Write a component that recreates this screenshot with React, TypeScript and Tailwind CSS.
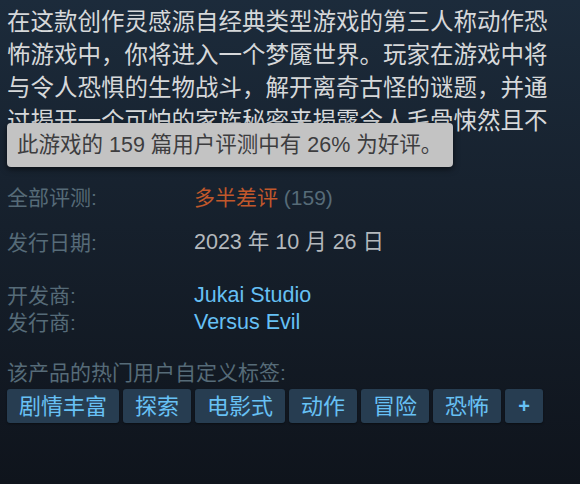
const tags = ["剧情丰富", "探索", "电影式", "动作", "冒险", "恐怖"];

const font = { fontFamily: '"Liberation Sans", "Noto Sans CJK SC", sans-serif' };

const App = () => {
  return (
    <div
      className="w-[580px] min-h-[484px] bg-gradient-to-b from-[#1c2b3b] to-[#0f141c] px-[7px]"
      style={font}
    >
      {/* description, cut off under the review tooltip */}
      <div className="relative pt-[6px]">
        <p className="w-[545px] h-[132px] overflow-hidden text-[23.5px] leading-[33px] text-[#d6d8da]">
          在这款创作灵感源自经典类型游戏的第三人称动作恐怖游戏中，你将进入一个梦魇世界。玩家在游戏中将与令人恐惧的生物战斗，解开离奇古怪的谜题，并通过揭开一个可怕的家族秘密来揭露令人毛骨悚然且不为人知的真相。
        </p>
        <div className="absolute left-0 top-[123px] w-[446px] h-[44px] flex items-center pl-[10px] rounded-[4px] bg-[#c3c3c3] text-[#3d3d3f] text-[21.5px] shadow-[0_2px_6px_rgba(0,0,0,0.6)]">
          此游戏的 159 篇用户评测中有 26% 为好评。
        </div>
      </div>

      <div className="grid grid-cols-[187px_1fr] text-[21px] leading-[27px]">
        <div className="mt-[46px] text-[#566b78]">全部评测:</div>
        <div className="mt-[46px]">
          <span className="text-[#c1582b]">多半差评</span>{" "}
          <span className="text-[#566b78]">(159)</span>
        </div>

        <div className="mt-[18px] text-[#566b78]">发行日期:</div>
        <div className="mt-[18px] text-[#b4b9bd] text-[21.5px]">2023 年 10 月 26 日</div>

        <div className="mt-[26px] text-[#566b78]">开发商:</div>
        <div className="mt-[26px] text-[#66c0f4] text-[21.5px]">Jukai Studio</div>

        <div className="text-[#566b78]">发行商:</div>
        <div className="text-[#66c0f4] text-[21.5px]">Versus Evil</div>
      </div>

      <div className="mt-[23px] text-[21px] leading-[27px] text-[#566b78]">
        该产品的热门用户自定义标签:
      </div>
      <div className="mt-[3px] flex gap-[4px]">
        {tags.map((t) => (
          <span
            key={t}
            className="h-[34px] px-[12px] flex items-center rounded-[3px] bg-[#273d51] text-[#67c1f5] text-[22px] shadow-[0_1px_2px_rgba(0,0,0,0.4)]"
          >
            {t}
          </span>
        ))}
        <span className="h-[34px] w-[38px] flex items-center justify-center rounded-[3px] bg-[#273d51] text-[#67c1f5] text-[20px] font-bold shadow-[0_1px_2px_rgba(0,0,0,0.4)]">
          +
        </span>
      </div>
    </div>
  );
};

export default App;
